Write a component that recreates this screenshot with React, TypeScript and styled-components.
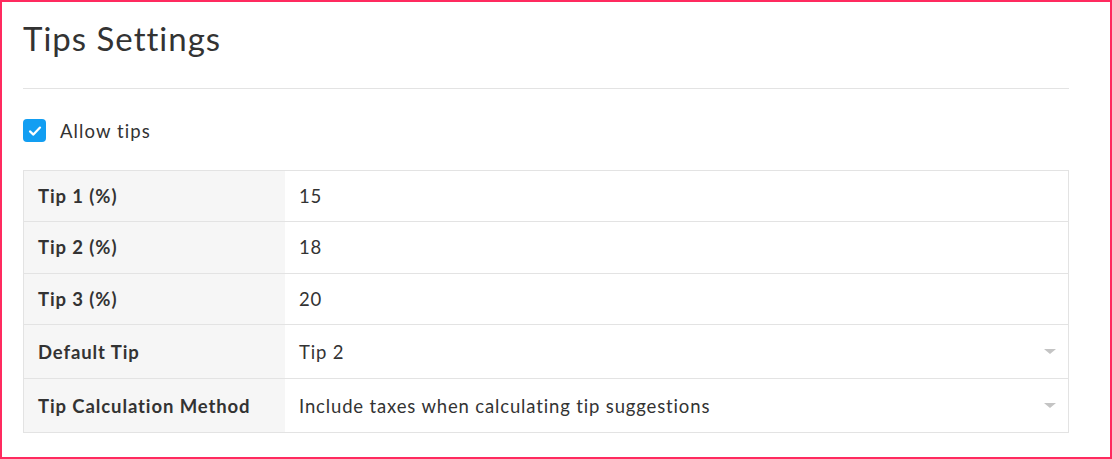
import styled, { createGlobalStyle } from "styled-components";

const GlobalStyle = createGlobalStyle`
  html, body {
    margin: 0;
    padding: 0;
    background: #fff;
  }
  * {
    box-sizing: border-box;
  }
`;

type Row = {
  label: string;
  value: string;
  select?: boolean;
};

const rows: Row[] = [
  { label: "Tip 1 (%)", value: "15" },
  { label: "Tip 2 (%)", value: "18" },
  { label: "Tip 3 (%)", value: "20" },
  { label: "Default Tip", value: "Tip 2", select: true },
  {
    label: "Tip Calculation Method",
    value: "Include taxes when calculating tip suggestions",
    select: true,
  },
];

export default function App() {
  return (
    <>
      <GlobalStyle />
      <Panel>
        <Title>Tips Settings</Title>
        <Divider />
        <CheckRow>
          <CheckBox>
            <svg width="16" height="16" viewBox="0 0 16 16">
              <path
                d="M3 8.4 L6.4 11.6 L13 4.6"
                fill="none"
                stroke="#fff"
                strokeWidth="2.2"
                strokeLinecap="round"
                strokeLinejoin="round"
              />
            </svg>
          </CheckBox>
          <CheckLabel>Allow tips</CheckLabel>
        </CheckRow>
        <Table>
          {rows.map((row) => (
            <TableRow key={row.label} $tall={row.select}>
              <LabelCell>{row.label}</LabelCell>
              <ValueCell>
                <span>{row.value}</span>
                {row.select && <Caret />}
              </ValueCell>
            </TableRow>
          ))}
        </Table>
      </Panel>
    </>
  );
}

const Panel = styled.div`
  width: 1112px;
  height: 459px;
  border: 2px solid #ff2a5f;
  padding: 16px 41px 0 21px;
  font-family: "Lato", "Liberation Sans", sans-serif;
  color: #333;
`;

const Title = styled.h1`
  margin: 0;
  font-size: 33px;
  font-weight: 400;
  line-height: 40px;
  letter-spacing: 1px;
  color: #333;
`;

const Divider = styled.hr`
  margin: 30px 0 0;
  border: 0;
  border-top: 1px solid #e3e3e3;
`;

const CheckRow = styled.label`
  display: flex;
  align-items: center;
  gap: 14px;
  margin-top: 30px;
`;

const CheckBox = styled.span`
  width: 23px;
  height: 23px;
  border-radius: 4px;
  background: #129ef2;
  display: flex;
  align-items: center;
  justify-content: center;
`;

const CheckLabel = styled.span`
  font-size: 18.5px;
  letter-spacing: 1.1px;
  color: #333;
`;

const Table = styled.div`
  margin-top: 28px;
  border: 1px solid #e3e3e3;
`;

const TableRow = styled.div<{ $tall?: boolean }>`
  display: grid;
  grid-template-columns: 261px 1fr;
  height: ${(p) => (p.$tall ? 54 : 51.5)}px;
  &:first-child {
    height: 50px;
  }
  & + & {
    border-top: 1px solid #e3e3e3;
  }
`;

const LabelCell = styled.div`
  background: #f6f6f6;
  padding-left: 14px;
  display: flex;
  align-items: center;
  font-size: 18.5px;
  font-weight: 700;
  letter-spacing: 0.9px;
  color: #333;
`;

const ValueCell = styled.div`
  padding: 0 12px 0 14px;
  display: flex;
  align-items: center;
  justify-content: space-between;
  font-size: 18.5px;
  letter-spacing: 0.85px;
  color: #333;
`;

const Caret = styled.span`
  width: 0;
  height: 0;
  border-left: 6px solid transparent;
  border-right: 6px solid transparent;
  border-top: 5px solid #c4c4c4;
`;
